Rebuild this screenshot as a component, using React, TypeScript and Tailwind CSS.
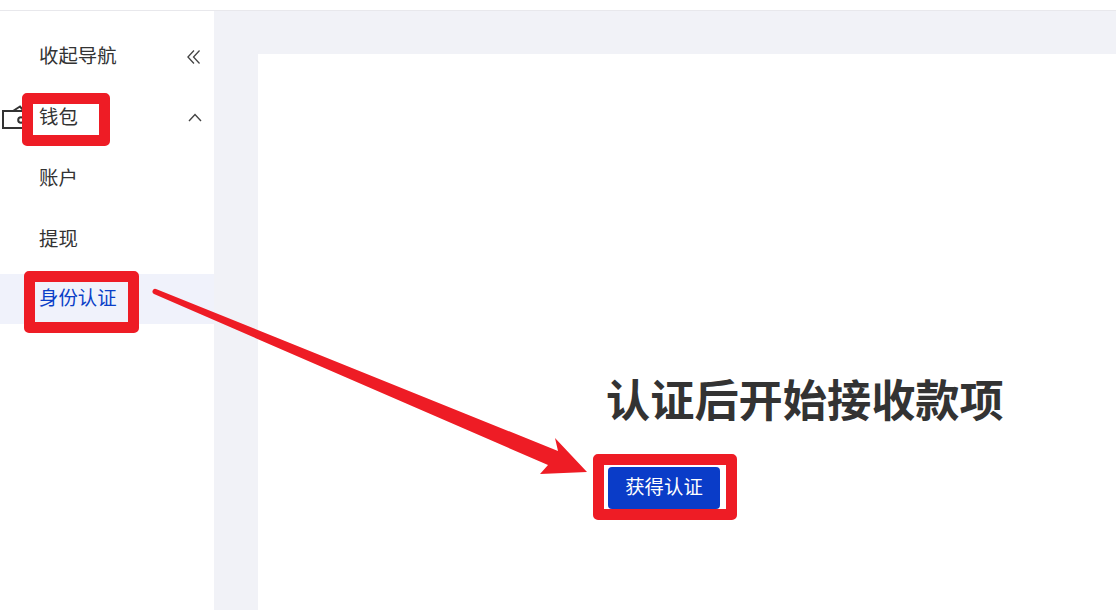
import React from "react";

const FONT = "font-['Liberation_Sans','Noto_Sans_CJK_SC',sans-serif]";

const Callout = ({ className }: { className: string }) => (
  <div className={`absolute border-[11px] border-[#ee1c25] rounded-[5px] ${className}`} />
);

export default function App() {
  return (
    <div className={`relative w-[1116px] h-[610px] overflow-hidden bg-white ${FONT}`}>
      {/* top bar */}
      <div className="h-[11px] border-b border-[#e8e8ec] bg-white" />

      <div className="flex h-[599px]">
        {/* sidebar */}
        <aside className="w-[214px] shrink-0 bg-white pt-[14px] text-[19.4px] leading-[26px] text-[#333333]">
          <div className="flex h-[62px] items-center justify-between pl-[39px] pr-[14px]">
            <span>收起导航</span>
            <svg className="mt-[2px]" width="13" height="16" viewBox="0 0 14 16" fill="none" stroke="#444444" strokeWidth="1.4">
              <path d="M7.5 1 L1 8 L7.5 15" />
              <path d="M13.5 1 L7 8 L13.5 15" />
            </svg>
          </div>
          <div className="relative flex h-[60px] items-center justify-between pl-[39px] pr-[12px]">
            <svg className="absolute left-[2px] top-[18px]" width="26" height="25" viewBox="0 0 26 25" fill="none" stroke="#333333" strokeWidth="2">
              <path d="M1 6h24v17H1z" />
              <path d="M11 6l7-4.5 4 4.5" />
              <circle cx="19" cy="15" r="2.8" />
            </svg>
            <span>钱包</span>
            <svg width="14" height="9" viewBox="0 0 14 9" fill="none" stroke="#444444" strokeWidth="1.4">
              <path d="M1 8 L7 1.5 L13 8" />
            </svg>
          </div>
          <div className="flex h-[61px] items-center pl-[39px]">账户</div>
          <div className="flex h-[61px] items-center pl-[39px]">提现</div>
          <div className="mt-[5px] flex h-[50px] items-center pb-[2px] pl-[39px] bg-[#f0f2fb] text-[#0a3fc8]">身份认证</div>
        </aside>

        {/* main */}
        <main className="flex-1 bg-[#f1f2f7] pl-[44px] pt-[43px]">
          <div className="h-full bg-white pl-[350px] pt-[320px]">
            <h1 className="ml-[-2px] text-[44.2px] leading-[56px] font-bold text-[#333333] whitespace-nowrap">认证后开始接收款项</h1>
            <button className="mt-[37px] flex h-[42px] w-[112px] items-center justify-center rounded-[4px] bg-[#0a3cc8] text-[19.4px] text-white">
              获得认证
            </button>
          </div>
        </main>
      </div>

      {/* annotations */}
      <Callout className="left-[22px] top-[93px] w-[88px] h-[53px]" />
      <Callout className="left-[24px] top-[271px] w-[115px] h-[62px]" />
      <Callout className="left-[593px] top-[454px] w-[144px] h-[66px]" />
      <svg className="absolute left-0 top-0" width="1116" height="610" viewBox="0 0 1116 610">
        <path
          d="M156 289 L558 451 L555 438 L587 472 L540 474 L548 465 L154 294 A2.7 2.7 0 0 1 156 289 Z"
          fill="#ee1c25"
        />
      </svg>
    </div>
  );
}
